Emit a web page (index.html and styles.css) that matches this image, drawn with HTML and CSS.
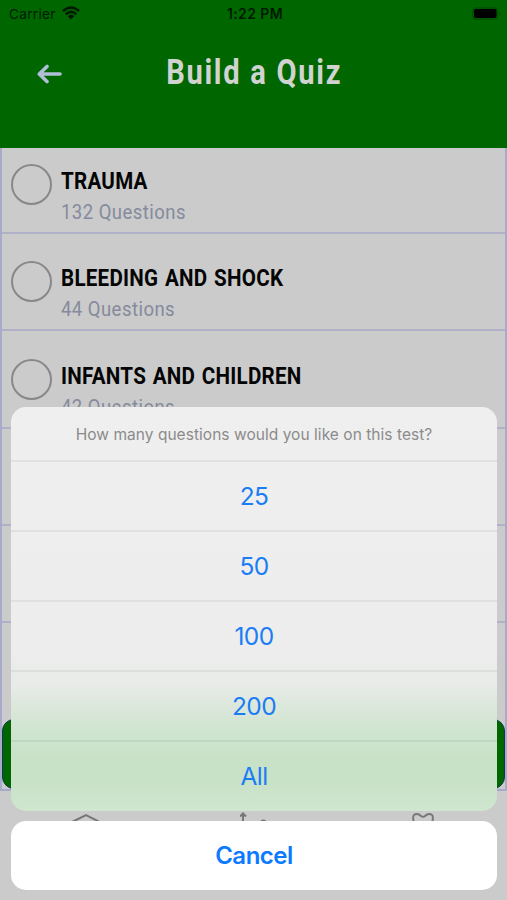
FILE: index.html
```html
<!DOCTYPE html>
<html lang="en">
<head>
<meta charset="utf-8">
<title>Build a Quiz</title>
<link rel="stylesheet" href="styles.css">
</head>
<body>
<div class="screen">
  <header class="header">
    <div class="status">
      <div class="carrier"><span class="carrier-name">Carrier</span>
        <svg class="wifi" viewBox="0 0 18 14"><g fill="none" stroke="#001a00" stroke-width="2.5"><path d="M1 5.100Q9-2 17 5.100"/><path d="M3.700 8.400Q9 3.400 14.300 8.400"/></g><path d="M5.800 10.200Q9 7.400 12.200 10.200L9 13.600Z" fill="#001a00"/></svg>
      </div>
      <div class="time">1:22 PM</div>
      <svg class="battery" viewBox="0 0 29 14"><rect x=".8" y=".8" width="24.500" height="11.400" rx="3.400" fill="none" stroke="#004d00" stroke-width="1.300"/><rect x="2" y="2" width="22.500" height="9" rx="2" fill="#000"/><path d="M27 4.600q2 2 0 4z" fill="#004d00"/></svg>
    </div>
    <div class="nav">
      <svg class="back" viewBox="0 0 26 20"><path d="M23 10H2.500M10 2.500 2.300 10l7.700 7.500" fill="none" stroke="#b0bfd6" stroke-width="3.600" stroke-linecap="round" stroke-linejoin="round"/></svg>
      <h1 class="title"><span>Build a Quiz</span></h1>
    </div>
  </header>
  <main class="list">
    <div class="row first"><i class="radio"></i><div class="label"><div class="name">TRAUMA</div><div class="count">132 Questions</div></div></div>
    <div class="row"><i class="radio"></i><div class="label"><div class="name">BLEEDING AND SHOCK</div><div class="count">44 Questions</div></div></div>
    <div class="row"><i class="radio"></i><div class="label"><div class="name">INFANTS AND CHILDREN</div><div class="count">42 Questions</div></div></div>
    <div class="row"></div>
    <div class="row"></div>
    <div class="spacer"></div>
    <div class="build"></div>
  </main>
  <footer class="tabs">
    <svg viewBox="0 0 28 26"><path d="M2 9.500 15 3l13 6.500V24H2z"/></svg>
    <svg viewBox="0 0 28 26"><path d="M3 24V1.500M0 4.500l3-3 3 3M13 24V9.500M21 11a2.500 2.500 0 0 1 5 0"/></svg>
    <svg viewBox="0 0 28 26"><path d="M5 11Q3 4 5.500 2.500 9 1 12 4q2 1.500 4 0 3-3 6.500-1.500Q25 4 23 11v13H5z"/></svg>
  </footer>
</div>
<div class="overlay">
  <div class="sheet">
    <div class="prompt">How many questions would you like on this test?</div>
    <div class="option">25</div>
    <div class="option">50</div>
    <div class="option">100</div>
    <div class="option">200</div>
    <div class="option">All</div>
  </div>
  <div class="cancel">Cancel</div>
</div>
</body>
</html>
```
FILE: styles.css
```css
* { box-sizing: border-box; }
body { margin: 0; }
.screen {
  width: 507px;
  height: 900px;
  display: flex;
  flex-direction: column;
  overflow: hidden;
  background: #cbcbcb;
  font-family: Roboto, "Liberation Sans", sans-serif;
}
.header { height: 148px; flex: none; background: #006600; }
.status {
  height: 28px;
  display: grid;
  grid-template-columns: 1fr auto 1fr;
  align-items: center;
  padding: 0 6px 0 9px;
  font: 500 13.5px/28px Inter, sans-serif;
  color: #001a00;
}
.carrier { display: flex; align-items: center; gap: 6px; font-weight: 400; letter-spacing: .35px; }
.wifi { width: 18px; height: 14px; margin-top: -2px; }
.time { font-size: 14px; font-weight: 600; letter-spacing: .4px; }
.battery { width: 29px; height: 14px; justify-self: end; }
.nav {
  height: 92px;
  display: grid;
  grid-template-columns: 62px 1fr 62px;
  align-items: center;
}
.back { width: 26px; height: 20px; margin-left: 37px; }
.title {
  margin: -4px 0 0 2px;
  text-align: center;
  font-size: 34.5px;
  line-height: 40px;
  font-weight: 700;
  color: #d0d3cf;
  letter-spacing: 2px;
  white-space: nowrap;
}
.title span { display: inline-block; transform: scaleX(.845); }
.list {
  height: 643px;
  flex: none;
  display: flex;
  flex-direction: column;
  border: solid #a8aacb;
  border-width: 0 2px 2px;
}
.row {
  height: 97.3px;
  flex: none;
  display: flex;
  align-items: flex-end;
  gap: 9px;
  padding: 0 0 7px 9px;
  border-bottom: 2px solid #b0b0c9;
}
.row.first { height: 86px; }
.radio {
  width: 41px;
  height: 41px;
  margin-bottom: 20px;
  border: 2px solid #888;
  border-radius: 50%;
}
.label { white-space: nowrap; }
.name {
  font-size: 24.5px;
  line-height: 30px;
  font-weight: 700;
  color: #050505;
  letter-spacing: .3px;
  word-spacing: 1.5px;
  transform: scaleX(.84);
  transform-origin: left;
}
.count {
  margin-top: 4px;
  font-size: 20px;
  line-height: 25px;
  font-weight: 400;
  color: #858a9c;
  letter-spacing: .5px;
  transform: scaleX(.925);
  transform-origin: left;
}
.spacer { flex: 1; }
.build {
  height: 70px;
  flex: none;
  background: #006600;
  border: 1px solid #0a3a50;
  border-radius: 12px;
}
.tabs {
  flex: 1;
  display: grid;
  grid-template-columns: repeat(3, 1fr);
  justify-items: center;
  padding-top: 21px;
}
.tabs svg { width: 28px; height: 26px; fill: none; stroke: #777; stroke-width: 2; }
.overlay {
  position: absolute;
  top: 407px;
  left: 11px;
  width: 486px;
  display: flex;
  flex-direction: column;
  gap: 10px;
  font-family: Inter, sans-serif;
  text-align: center;
}
.sheet {
  height: 404px;
  border-radius: 15px;
  overflow: hidden;
  background: linear-gradient(#efefef 0, #ededed 240px, #e8ebe8 278px, #d3e5d3 315px, #c8e2c8 350px, #c8e2c8 375px, #cfe6cf 404px);
}
.prompt {
  height: 53px;
  font-size: 15.5px;
  line-height: 55px;
  letter-spacing: .04px;
  color: #8b8b8b;
}
.option {
  height: 70px;
  border-top: 2px solid rgba(0, 0, 0, .055);
  font-size: 24.5px;
  line-height: 69px;
  letter-spacing: -.6px;
  color: #1a7df4;
}
.cancel {
  height: 69px;
  border-radius: 15px;
  background: #fff;
  font-size: 24px;
  line-height: 69px;
  font-weight: 600;
  letter-spacing: -.5px;
  color: #0b7aff;
}
```
